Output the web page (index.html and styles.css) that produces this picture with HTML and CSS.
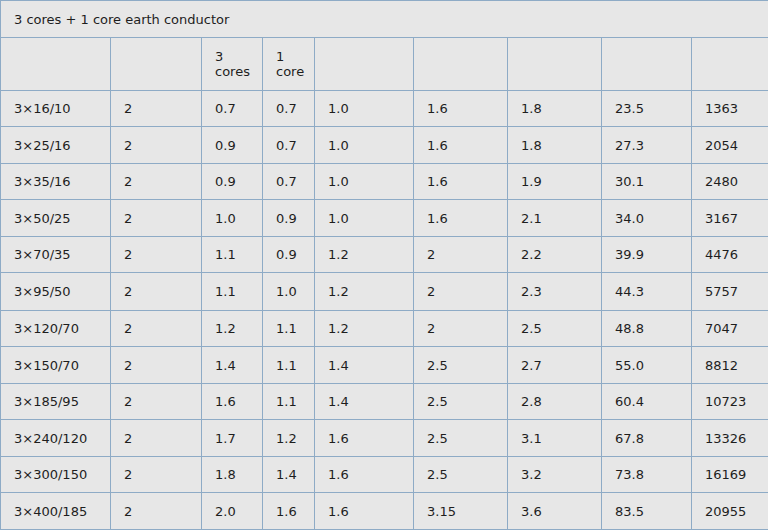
FILE: index.html
```html
<!DOCTYPE html>
<html>
<head>
<meta charset="utf-8">
<link rel="stylesheet" href="styles.css">
</head>
<body>
<table class="cable">
<colgroup>
<col class="c1"><col class="c2"><col class="c3"><col class="c4"><col class="c5"><col class="c6"><col class="c7"><col class="c8"><col class="c9">
</colgroup>
<tr class="title"><td colspan="9">3 cores + 1 core earth conductor</td></tr>
<tr class="sub"><td></td><td></td><td>3<br>cores</td><td>1<br>core</td><td></td><td></td><td></td><td></td><td></td></tr>
<tr class="r"><td>3×16/10</td><td>2</td><td>0.7</td><td>0.7</td><td>1.0</td><td>1.6</td><td>1.8</td><td>23.5</td><td>1363</td></tr>
<tr class="r"><td>3×25/16</td><td>2</td><td>0.9</td><td>0.7</td><td>1.0</td><td>1.6</td><td>1.8</td><td>27.3</td><td>2054</td></tr>
<tr class="r"><td>3×35/16</td><td>2</td><td>0.9</td><td>0.7</td><td>1.0</td><td>1.6</td><td>1.9</td><td>30.1</td><td>2480</td></tr>
<tr class="r"><td>3×50/25</td><td>2</td><td>1.0</td><td>0.9</td><td>1.0</td><td>1.6</td><td>2.1</td><td>34.0</td><td>3167</td></tr>
<tr class="r"><td>3×70/35</td><td>2</td><td>1.1</td><td>0.9</td><td>1.2</td><td>2</td><td>2.2</td><td>39.9</td><td>4476</td></tr>
<tr class="r tall"><td>3×95/50</td><td>2</td><td>1.1</td><td>1.0</td><td>1.2</td><td>2</td><td>2.3</td><td>44.3</td><td>5757</td></tr>
<tr class="r"><td>3×120/70</td><td>2</td><td>1.2</td><td>1.1</td><td>1.2</td><td>2</td><td>2.5</td><td>48.8</td><td>7047</td></tr>
<tr class="r"><td>3×150/70</td><td>2</td><td>1.4</td><td>1.1</td><td>1.4</td><td>2.5</td><td>2.7</td><td>55.0</td><td>8812</td></tr>
<tr class="r"><td>3×185/95</td><td>2</td><td>1.6</td><td>1.1</td><td>1.4</td><td>2.5</td><td>2.8</td><td>60.4</td><td>10723</td></tr>
<tr class="r"><td>3×240/120</td><td>2</td><td>1.7</td><td>1.2</td><td>1.6</td><td>2.5</td><td>3.1</td><td>67.8</td><td>13326</td></tr>
<tr class="r"><td>3×300/150</td><td>2</td><td>1.8</td><td>1.4</td><td>1.6</td><td>2.5</td><td>3.2</td><td>73.8</td><td>16169</td></tr>
<tr class="r"><td>3×400/185</td><td>2</td><td>2.0</td><td>1.6</td><td>1.6</td><td>3.15</td><td>3.6</td><td>83.5</td><td>20955</td></tr>
</table>
</body>
</html>
```
FILE: styles.css
```css
html, body {
  margin: 0;
  padding: 0;
  background: #ffffff;
}
.cable {
  border-collapse: collapse;
  table-layout: fixed;
  width: 768px;
  background: #e7e7e7;
  font-family: "DejaVu Sans", sans-serif;
  font-size: 13px;
  color: #1e1e1e;
}
.cable td {
  border: 1px solid #8eabc6;
  padding: 0 0 0 13px;
  vertical-align: middle;
  line-height: 15px;
}
.c1 { width: 110px; }
.c2 { width: 91px; }
.c3 { width: 61px; }
.c4 { width: 52px; }
.c5 { width: 99px; }
.c6 { width: 94px; }
.c7 { width: 94px; }
.c8 { width: 90px; }
.c9 { width: 77px; }
.title td { height: 36px; }
.sub td { height: 52px; }
.r td { height: 36px; }
.r:nth-child(odd) td { height: 35px; }
.r.tall td { height: 37px; }
```
